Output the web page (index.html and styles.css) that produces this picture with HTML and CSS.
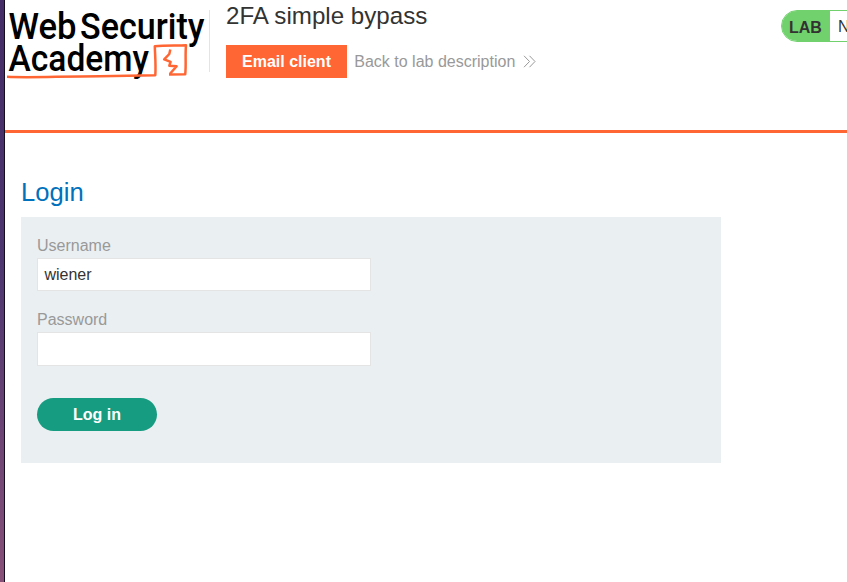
FILE: index.html
```html
<!DOCTYPE html>
<html lang="en">
<head>
<meta charset="utf-8">
<title>2FA simple bypass</title>
<link rel="stylesheet" href="styles.css">
</head>
<body>
<div class="window">
  <header class="lab-header">
    <svg class="logo" width="205" height="86" viewBox="5 0 205 86">
      <g class="logo-text">
        <text x="8.5" y="38.6" textLength="68" lengthAdjust="spacingAndGlyphs">Web</text>
        <text x="80" y="38.6" textLength="124.5" lengthAdjust="spacingAndGlyphs">Security</text>
        <text x="8.5" y="71" textLength="140.5" lengthAdjust="spacingAndGlyphs">Academy</text>
      </g>
      <g class="logo-mark">
        <path d="M7 76.8C30 78 60 76.3 100 76.3L155.3 75.2C156 64 155 55 154.8 46.3C165 45 176 45.8 186 45.3C185 55 186.3 65 185.2 74.3L169 74.6"/>
        <path d="M170.3 49.5L169.3 54L164.2 59.3L170.6 61.8L169.3 65.7L176.6 66.2L169.8 74"/>
      </g>
    </svg>
    <div class="title-container">
      <h2>2FA simple bypass</h2>
      <div class="actions">
        <a class="email">Email client</a>
        <a class="back">Back to lab description
          <svg width="13" height="14" viewBox="0 0 13 14"><path d="M1 .8L6.5 6.5L1 12.2M6.5 .8L12 6.5L6.5 12.2"/></svg>
        </a>
      </div>
    </div>
    <div class="status"><span class="lab">LAB</span><span class="state">Not solved</span></div>
  </header>
  <main>
    <h1>Login</h1>
    <form>
      <label for="username">Username</label>
      <input id="username" type="text" value="wiener">
      <label for="password">Password</label>
      <input id="password" class="password" type="password">
      <button type="button">Log in</button>
    </form>
  </main>
</div>
</body>
</html>
```
FILE: styles.css
```css
* { box-sizing: border-box; }
body {
  margin: 0;
  height: 582px;
  overflow: hidden;
  padding-left: 4px;
  background: linear-gradient(#452d68, #4d3670 45%, #875078);
  font: 16px/18px "Liberation Sans", Arial, sans-serif;
  color: #333332;
}
.window {
  height: 582px;
  overflow: hidden;
  border-left: 1px solid #160d20;
  background: #fff;
}
.lab-header {
  display: flex;
  align-items: flex-start;
  height: 133px;
  border-bottom: 3px solid #ff6633;
}
.logo {
  flex: none;
  background: linear-gradient(#e4e4e4, #e4e4e4) 204px 10px / 1px 62px no-repeat;
}
.logo-text {
  font: 500 37.5px Roboto, sans-serif;
  fill: #000;
}
.logo-mark {
  fill: none;
  stroke: #ff6633;
  stroke-width: 2.5;
  stroke-linejoin: round;
}
.title-container {
  flex: none;
  width: 571px;
  padding-left: 16px;
}
h2 {
  margin: 2px 0 15px;
  font-size: 24.16px;
  line-height: 28px;
  font-weight: 400;
}
.actions { display: flex; align-items: center; }
.email {
  width: 121px;
  height: 33px;
  background: #ff6633;
  color: #fff;
  font-weight: 700;
  line-height: 33px;
  text-align: center;
}
.back {
  display: flex;
  align-items: center;
  gap: 8px;
  margin-left: 7.3px;
  color: #999;
}
.back svg { fill: none; stroke: #999; stroke-width: 1; }
.status {
  flex: none;
  display: flex;
  width: 150px;
  height: 32px;
  margin-top: 10px;
  border: 1px solid #71d16d;
  border-radius: 16px;
  overflow: hidden;
  line-height: 33px;
}
.lab {
  width: 48px;
  padding-left: 7px;
  background: #71d16d;
  font-weight: 700;
}
.state { padding-left: 8px; white-space: nowrap; line-height: 32px; }
main { padding: 43px 16px 0; }
h1 {
  margin: 0 0 9px;
  color: #0071bc;
  font-size: 25.6px;
  line-height: 32px;
  font-weight: 400;
}
form {
  width: 700px;
  height: 246px;
  padding: 19px 16px;
  background: #eaeff2;
}
label {
  display: block;
  height: 22px;
  line-height: 20px;
  color: #999;
}
input {
  display: block;
  width: 334px;
  height: 33px;
  margin: 0 0 19px;
  padding: 0 6.4px;
  border: 1px solid #e4e4e4;
  border-radius: 0;
  background: #fff;
  color: #333332;
  font: inherit;
}
.password { height: 34px; margin-bottom: 32px; }
button {
  display: block;
  width: 120px;
  height: 33px;
  padding: 0;
  border: 0;
  border-radius: 17px;
  background: #169c80;
  color: #fff;
  font: 700 16px/33px "Liberation Sans", Arial, sans-serif;
}
```
